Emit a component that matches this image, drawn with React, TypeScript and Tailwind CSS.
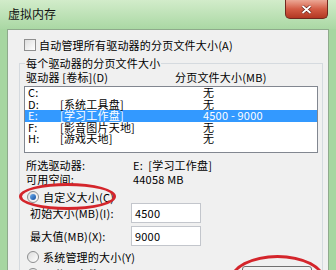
const drives = [
  { d: 'C:', label: '', size: '无', sel: false },
  { d: 'D:', label: '[系统工具盘]', size: '无', sel: false },
  { d: 'E:', label: '[学习工作盘]', size: '4500 - 9000', sel: true },
  { d: 'F:', label: '[影音图片天地]', size: '无', sel: false },
  { d: 'H:', label: '[游戏天地]', size: '无', sel: false },
];

function Radio({ checked }: { checked?: boolean }) {
  return (
    <span className="flex h-[12px] w-[12px] shrink-0 items-center justify-center rounded-full border border-[#8c8e8f] bg-gradient-to-br from-[#dcdcdc] to-[#ffffff]">
      {checked && (
        <span className="h-[6px] w-[6px] rounded-full bg-gradient-to-br from-[#6fb0f0] to-[#0c4c9e]" />
      )}
    </span>
  );
}

export default function App() {
  return (
    <div className="relative h-[270px] w-[336px] overflow-hidden bg-[#a7d6a1] font-['Noto_Sans_CJK_SC',sans-serif] text-[11px] leading-[14px] tracking-[0.2px] text-black">
      {/* title bar */}
      <div className="flex h-[29px] items-start bg-gradient-to-b from-[#d2ecca] to-[#aad8a4]">
        <span className="ml-[8px] mt-[7px] text-[12px] leading-[14px] tracking-normal text-[#111]">虚拟内存</span>
        <div className="ml-auto mr-[8px] flex h-[19px] w-[43px] items-center justify-center rounded-b-[5px] border border-t-0 border-[#70281f] bg-gradient-to-b from-[#eba795] via-[#d35c45] to-[#b23722]">
          <svg width="11" height="9" viewBox="0 0 11 9">
            <path d="M1.5 1 L9.5 8 M9.5 1 L1.5 8" stroke="#5a1a12" strokeWidth="3" />
            <path d="M1.5 1 L9.5 8 M9.5 1 L1.5 8" stroke="#ffffff" strokeWidth="1.8" />
          </svg>
        </div>
      </div>

      {/* client */}
      <div className="mx-[7px] h-[241px] border border-b-0 border-[#8faa8c] bg-[#f0f0f0]">
        <div className="ml-[16px] mt-[8px] flex h-[14px] items-center">
          <span className="h-[12px] w-[12px] border border-[#8f8f8f] bg-gradient-to-br from-[#dedede] to-[#ffffff]" />
          <span className="ml-[3px]">自动管理所有驱动器的分页文件大小(A)</span>
        </div>

        <fieldset className="ml-[11px] mt-[4px] w-[303px] border border-b-0 border-[#d5dadf] px-[4px]">
          <legend className="ml-[1px] px-[1px] leading-[14px]">每个驱动器的分页文件大小</legend>
          <div className="flex h-[14px]">
            <span className="w-[151px] pl-[2px]">驱动器 [卷标](D)</span>
            <span>分页文件大小(MB)</span>
          </div>

          <div className="mt-[2px] h-[67px] w-[294px] border border-[#828790] bg-white">
            {drives.map((r) => (
              <div
                key={r.d}
                className={`flex h-[11.5px] items-center leading-[11.5px] ${r.sel ? 'bg-[#3399ff] text-white' : ''}`}
              >
                <span className="w-[35px] pl-[3px]">{r.d}</span>
                <span className="w-[143px]">{r.label}</span>
                <span>{r.size}</span>
              </div>
            ))}
          </div>

          <div className="mt-[5px] flex h-[14px] pl-[2px]">
            <span className="w-[107px]">所选驱动器:</span>
            <span>E:&nbsp;&nbsp;[学习工作盘]</span>
          </div>
          <div className="flex h-[14px] pl-[2px]">
            <span className="w-[107px]">可用空间:</span>
            <span>44058 MB</span>
          </div>

          <div className="mt-[5px] flex h-[12px] items-center gap-[4px] pl-[3px]">
            <Radio checked />
            <span>自定义大小(C)</span>
          </div>

          <div className="flex h-[20px] items-center">
            <span className="w-[107px] pl-[6px]">初始大小(MB)(I):</span>
            <span className="flex h-[20px] w-[70px] items-center border border-[#c3c6cc] bg-white pl-[3px]">4500</span>
          </div>
          <div className="mt-[3px] flex h-[20px] items-center">
            <span className="w-[107px] pl-[6px]">最大值(MB)(X):</span>
            <span className="flex h-[20px] w-[70px] items-center border border-[#c3c6cc] bg-white pl-[3px]">9000</span>
          </div>

          <div className="mt-[4px] flex h-[14px] items-center gap-[4px] pl-[3px]">
            <Radio />
            <span>系统管理的大小(Y)</span>
          </div>

          <div className="mt-[2px] flex h-[22px] items-start">
            <div className="mt-[1px] flex h-[14px] items-center gap-[4px] pl-[3px]">
              <Radio />
              <span>无分页文件(N)</span>
            </div>
            <button className="ml-auto mr-[6px] flex h-[22px] w-[70px] items-start justify-center rounded-[3px] border border-[#707070] bg-gradient-to-b from-[#f2f2f2] to-[#dcdcdc] pt-[2px]">
              设置(S)
            </button>
          </div>
        </fieldset>
      </div>

      {/* red annotation marks */}
      <div className="absolute left-[19px] top-[183px] h-[27px] w-[97px] rounded-[50%] border-[3px] border-[#d4252b]" />
      <div className="absolute left-[230px] top-[255px] h-[50px] w-[95px] rounded-[50%] border-[3px] border-[#d4252b]" />
    </div>
  );
}
